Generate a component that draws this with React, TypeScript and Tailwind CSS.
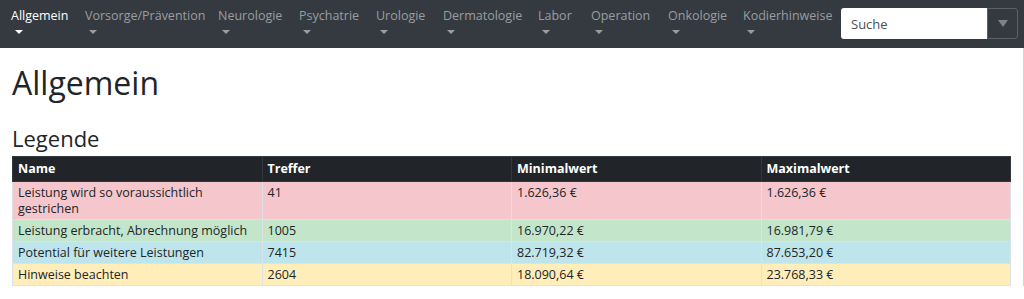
const navItems = [
  { label: "Allgemein", w: "w-[74px]" },
  { label: "Vorsorge/Prävention", w: "w-[133px]" },
  { label: "Neurologie", w: "w-[81px]" },
  { label: "Psychatrie", w: "w-[77px]" },
  { label: "Urologie", w: "w-[67px]" },
  { label: "Dermatologie", w: "w-[95px]" },
  { label: "Labor", w: "w-[53px]" },
  { label: "Operation", w: "w-[77px]" },
  { label: "Onkologie", w: "w-[75px]" },
  { label: "Kodierhinweise", w: "w-[92px]" },
];

const rows = [
  { name: "Leistung wird so voraussichtlich gestrichen", hits: "41", min: "1.626,36 €", max: "1.626,36 €", bg: "bg-[#f5c6cb]" },
  { name: "Leistung erbracht, Abrechnung möglich", hits: "1005", min: "16.970,22 €", max: "16.981,79 €", bg: "bg-[#c3e6cb]" },
  { name: "Potential für weitere Leistungen", hits: "7415", min: "82.719,32 €", max: "87.653,20 €", bg: "bg-[#bee5eb]" },
  { name: "Hinweise beachten", hits: "2604", min: "18.090,64 €", max: "23.768,33 €", bg: "bg-[#ffeeba]" },
];

const Caret = ({ className }: { className: string }) => (
  <span
    className={`block w-0 h-0 border-l-[4px] border-r-[4px] border-t-[4px] border-l-transparent border-r-transparent ${className}`}
  />
);

const App = () => {
  return (
    <div className="min-h-screen bg-white font-['Open_Sans',sans-serif] text-[#212529]">
      <nav className="h-12 bg-[#343a40] flex items-start pl-[11px] pr-[6px]">
        <ul className="flex items-start pt-[7px]">
          {navItems.map((item, i) => (
            <li key={item.label} className={`shrink-0 ${item.w}`}>
              <a
                href="#"
                className={`block whitespace-nowrap text-[12.5px] leading-[18px] ${i === 0 ? "text-white" : "text-[#9a9da0]"}`}
              >
                {item.label}
              </a>
              <Caret className={`ml-[4px] mt-[5px] ${i === 0 ? "border-t-white" : "border-t-[#9a9da0]"}`} />
            </li>
          ))}
        </ul>
        <div className="ml-auto mt-[8px] flex h-[31px]">
          <input
            type="text"
            placeholder="Suche"
            className="w-[146px] h-full bg-white rounded-l-[3px] px-[10px] text-[13px] text-[#495057] placeholder:text-[#495057] outline-none"
          />
          <button className="w-[31px] h-full border border-[#5a6168] rounded-r-[3px] flex items-center justify-center">
            <Caret className="border-l-[5px] border-r-[5px] border-t-[7px] border-t-[#7d8389]" />
          </button>
        </div>
      </nav>

      <div className="px-3 border-r border-[#d5d5d5]">
        <h1 className="text-[32px] leading-[38px] font-normal pt-[16px]">Allgemein</h1>
        <h2 className="text-[22px] leading-[28px] font-normal mt-[22px] mb-[4px]">Legende</h2>
        <table className="w-full table-fixed border-collapse text-[12.5px] leading-[16px] text-[#212529]">
          <thead>
            <tr className="bg-[#212529] text-white">
              {["Name", "Treffer", "Minimalwert", "Maximalwert"].map((h) => (
                <th key={h} className="text-left font-bold px-[5px] py-[4px] border border-[#32383e]">
                  {h}
                </th>
              ))}
            </tr>
          </thead>
          <tbody>
            {rows.map((r) => (
              <tr key={r.name} className={r.bg}>
                <td className="align-top px-[5px] pt-[3px] pb-[2px] border border-[#dee2e6]">{r.name}</td>
                <td className="align-top px-[5px] pt-[3px] pb-[2px] border border-[#dee2e6]">{r.hits}</td>
                <td className="align-top px-[5px] pt-[3px] pb-[2px] border border-[#dee2e6]">{r.min}</td>
                <td className="align-top px-[5px] pt-[3px] pb-[2px] border border-[#dee2e6]">{r.max}</td>
              </tr>
            ))}
          </tbody>
        </table>
      </div>
    </div>
  );
};

export default App;
